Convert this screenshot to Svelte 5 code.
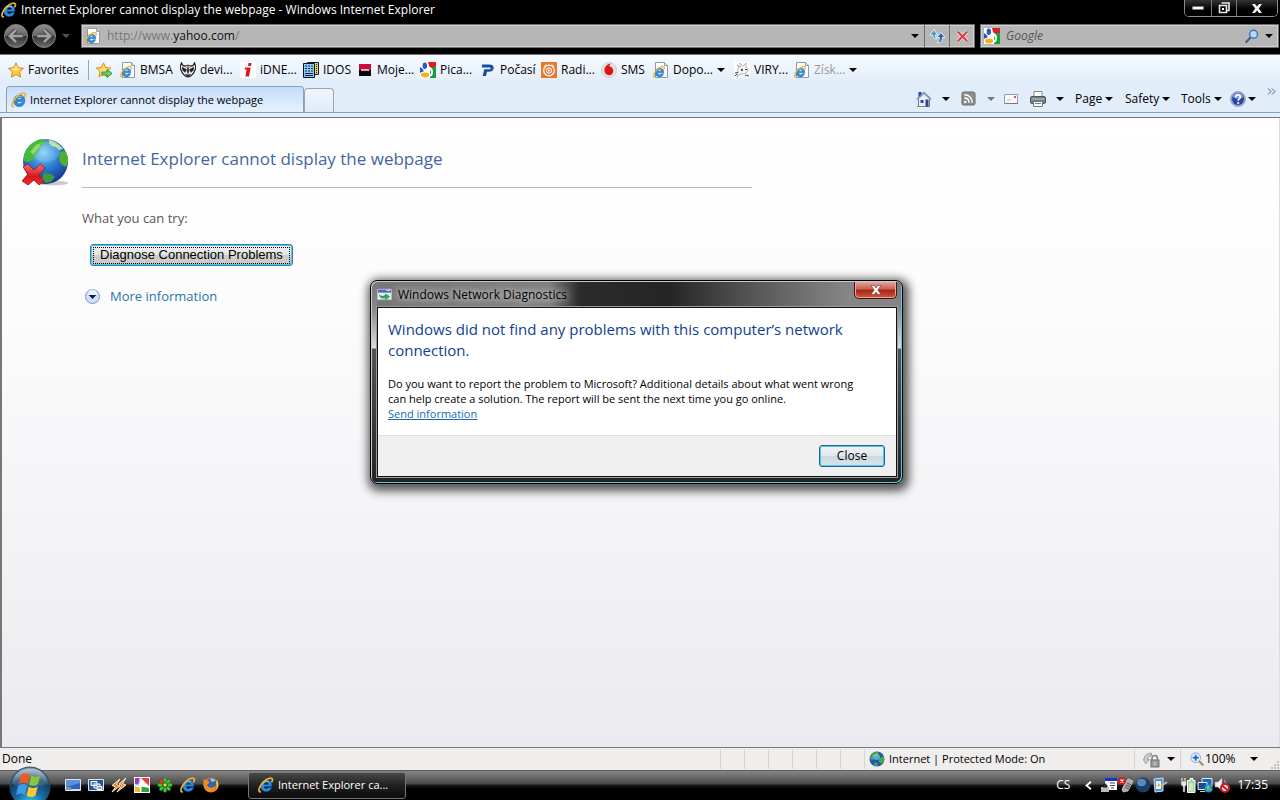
<script>
  const bookmarks = [
    { label: 'BMSA', icon: 'page' },
    { label: 'devi...', icon: 'devil' },
    { label: 'iDNE...', icon: 'idnes' },
    { label: 'IDOS', icon: 'idos' },
    { label: 'Moje...', icon: 'moje' },
    { label: 'Pica...', icon: 'google' },
    { label: 'Počasí', icon: 'pocasi' },
    { label: 'Radi...', icon: 'radio' },
    { label: 'SMS', icon: 'sms' },
    { label: 'Dopo...', icon: 'page', menu: true },
    { label: 'VIRY...', icon: 'viry' },
    { label: 'Získ...', icon: 'page', menu: true, dim: true }
  ];
  const launchers = [
    ['desktop', 'Show desktop'],
    ['switch', 'Switch between windows'],
    ['winamp', 'Winamp'],
    ['picasa', 'Picasa'],
    ['icq', 'ICQ'],
    ['ie', 'Internet Explorer'],
    ['firefox', 'Firefox']
  ];
  const tray = ['keyboard', 'device', 'ball', 'tablet', 'power', 'network', 'mute'];
  let query = $state('');
  let dialogOpen = $state(true);
</script>

{#snippet arrow()}
  <svg class="arrow" viewBox="0 0 8 4" width="8" height="4"><path d="M0 0h8L4 4z" fill="currentColor" /></svg>
{/snippet}

{#snippet ieMark()}
  <path d="M13.900 9.400H6.100c.1 1.500 1 2.400 2.300 2.400 1 0 1.700-.4 2.100-1.200h3.100c-.8 2.600-2.700 4-5.300 4-3.300 0-5.600-2.300-5.600-5.700s2.400-5.800 5.700-5.800c3.500 0 5.600 2.400 5.500 6.300zM6.200 7.400h4.500c-.2-1.200-1-1.900-2.200-1.900s-2 .7-2.300 1.900z" fill="#2c8fe0" stroke="#0d4f9f" stroke-width=".5" />
  <path d="M4.500 6.500c1-2 4-3 6.500-1.500" fill="none" stroke="#8fd0fa" stroke-width=".8" />
  <path d="M2.300 14.900C.2 14.800.6 11.300 3 7.900 6 3.600 11.300.2 13.700 1.400c1 .5.9 1.900.2 3.300" fill="none" stroke="#f1b32c" stroke-width="1.700" stroke-linecap="round" />
{/snippet}

{#snippet googleMark()}
  <path d="M0 0h16v16H0z" fill="#fff" />
  <path d="M8 0h8v5H9z" fill="#e02020" /><path d="M10 5h6v11h-6z" fill="#16a03c" />
  <path d="M0 5l3 2 1 4-4 2z" fill="#2a56c8" />
  <circle cx="5" cy="4" r="3.700" fill="#fff" /><ellipse cx="4.800" cy="3.800" rx="2.200" ry="3.300" fill="#2a56c8" />
  <ellipse cx="5" cy="12.700" rx="5.500" ry="3.300" fill="#fff" /><ellipse cx="5" cy="13" rx="4" ry="2.400" fill="#f3b11e" />
  <path d="M8 5c5 2 5 7 2 9" fill="none" stroke="#fff" stroke-width="2" />
{/snippet}

{#snippet icon(name, size = 16)}
  <svg class="icon" viewBox="0 0 16 16" width={size} height={size} aria-hidden="true">
    {#if name === 'ie'}
      {@render ieMark()}
    {:else if name === 'page'}
      <path d="M2.500.5h9l3 3v12h-12z" fill="#fff" stroke="#8f9aa8" /><path d="M11.500.5v3h3" fill="#dfe6ee" stroke="#8f9aa8" />
      <g transform="translate(0 3.500) scale(.78)">{@render ieMark()}</g>
    {:else if name === 'star'}
      <path d="M8 .8l2.200 4.900 5.300.6-4 3.600 1.200 5.300L8 12.500l-4.700 2.700 1.200-5.300-4-3.600 5.300-.6z" fill="#ffc93c" stroke="#d98a16" stroke-linejoin="round" />
      <path d="M8 2.800l1.500 3.600 3.800.5-6.600 2-3.900-2 3.700-.5z" fill="#ffeb9a" />
    {:else if name === 'addstar'}
      <path d="M7.500.8l2.100 4.700 5.100.6-3.900 3.500 1.100 5.200-4.400-2.600L3 14.800l1.100-5.200L.3 6.100l5-.6z" fill="#ffdf70" stroke="#d98a16" stroke-linejoin="round" />
      <path d="M6 10h5V7.500l5 4-5 4V13H6z" fill="#6ed45c" stroke="#1f7d25" stroke-width=".8" />
    {:else if name === 'devil'}
      <path d="M1.500 1C0 4 0 6.500 1 8c1 3 4 7 7 7s6-4 7-7c1-1.500 1-4-.5-7-.5 2-2 3-3.500 3-2-1-4-1-6 0C3.500 4 2 3 1.500 1z" fill="#fff" stroke="#222" stroke-width="1.200" />
      <path d="M2 5l4.500 2.500L5 10.500 2.500 8zM14 5L9.500 7.500l1.500 3L13.500 8zM8 4l1 5-1 3-1-3zM5 12l3 1 3-1-3 3zM4 4l3 2M12 4L9 6" fill="#222" stroke="#222" stroke-width=".5" />
    {:else if name === 'idnes'}
      <path d="M0 0h16v16H0z" fill="#fff" /><path d="M8.500 1h3L11 4H8zM5 5.500h5.700L9 14.500H5.500l1-7H4.600z" fill="#d91a1a" />
    {:else if name === 'idos'}
      <path d="M4.500.5h11v12h-11z" fill="#e9cf58" stroke="#111b35" /><path d="M.5 1.500h11v14H.5z" fill="#8fcdf0" stroke="#07142f" />
      <path d="M2 4h2M5 4h2M8 4h2M2 6.500h2M5 6.500h2M8 6.500h2M2 9h2M5 9h2M8 9h2M2 11.500h8M2 13.500h8" stroke="#0b2455" /><path d="M13.500 2v10" stroke="#222" stroke-dasharray="1 1" />
    {:else if name === 'moje'}
      <path d="M2 2h12v6H2z" fill="#c90c3e" /><path d="M2 8h12v6H2z" fill="#070707" /><path d="M4 8h8" stroke="#fff" stroke-width="1.400" />
    {:else if name === 'google'}
      {@render googleMark()}
    {:else if name === 'pocasi'}
      <path d="M2 2.500h7.500c3 0 4.500 1.500 4.200 3.700-.3 2.300-2.200 3.600-5 3.600H7L6 14H2.600l1.700-6.700h5c.8 0 1.100-.3 1.200-.9.100-.5-.2-.8-.9-.8H2z" fill="#17509e" />
    {:else if name === 'radio'}
      <path d="M0 0h16v16H0z" fill="#e7792d" /><path d="M3 4.500l2-2M13 4.500l-2-2" stroke="#fff" /><circle cx="8" cy="8.500" r="5.300" fill="none" stroke="#fff" stroke-width="1.200" /><circle cx="8" cy="8.500" r="2.700" fill="none" stroke="#fff" /><path d="M7 7l3 1.500L7 10z" fill="#fff" />
    {:else if name === 'sms'}
      <circle cx="8" cy="8" r="7.500" fill="#e4e4e4" stroke="#bbb" stroke-width=".6" /><path d="M10.800 1.500c-2 .3-2.500 1.700-2.400 2.700 2 .5 3.900 2 3.900 4.600A4.300 4.300 0 0 1 8 13.200a4.600 4.600 0 0 1-4.600-4.800C3.400 5 6 1.500 10.800 1.500z" fill="#df1414" />
    {:else if name === 'viry'}
      <path d="M0 0h16v16H0z" fill="#fff" /><path d="M3 3l3 2 0-4 3 3 3-3 0 4c2 1 2 5 0 6l-3 1H6L3 15l1-5c-1-2 0-4 1-5z" fill="#f4f4f4" stroke="#999" stroke-width=".7" /><circle cx="8" cy="8" r="1" fill="#222" /><path d="M11 7.500h2M1 11l3-.500M11 13l4 1M1 14l2-2" stroke="#444" />
    {:else if name === 'home'}
      <path d="M2.500 1h3v5h-3z" fill="#2337c4" /><path d="M2.500 7.500L8 2.500l5.500 5v8h-11z" fill="#e8eef7" stroke="#6d7b96" /><path d="M.7 8.200L8 1.500l7.300 6.700" fill="none" stroke="#8397bd" stroke-width="1.400" />
      <path d="M4.500 9h3v3h-3z" fill="#2f4d99" /><path d="M9.500 8.500h3v7h-3z" fill="#324789" /><path d="M1 15.500h6" stroke="#5aa44c" />
    {:else if name === 'feed'}
      <rect x="1" y="1" width="14" height="14" rx="2" fill="#8b8b8b" stroke="#6f6f6f" /><circle cx="4.500" cy="11.700" r="1.300" fill="#fff" /><path d="M3.500 7.500c3 0 5 2 5 5M3.500 4c5 0 8.500 3.500 8.500 8.500" fill="none" stroke="#fff" stroke-width="1.500" />
    {:else if name === 'mail'}
      <path d="M1.500 3.500h13v9h-13z" fill="#f8f8fa" stroke="#9b9ba6" /><path d="M2 12.500h13" stroke="#777" /><path d="M11 5h2v2h-2z" fill="#d45454" /><path d="M4 9h4" stroke="#bbb" />
    {:else if name === 'printer'}
      <path d="M4 .5h8v6H4z" fill="#fff" stroke="#888" /><rect x=".5" y="5.500" width="15" height="7" rx="1.500" fill="#777d85" stroke="#4f555c" /><path d="M1.500 8h13" stroke="#c4c9cf" /><path d="M3.500 10.500h9v5h-9z" fill="#f6f8f9" stroke="#777" /><path d="M5 12.500h6" stroke="#3e9c7e" />
    {:else if name === 'help'}
      <circle cx="8" cy="8" r="7.500" fill="#9aa7c5" stroke="#7f8ca8" stroke-width=".6" /><circle cx="8" cy="8" r="6" fill="#2346a8" /><path d="M2.800 6a5.500 5.500 0 0 1 10.400 0c-3 2-7 2-10.400 0z" fill="#7f9fdf" /><path d="M5.700 6.200c.1-3 4.700-2.900 4.700-.2 0 1.700-2.200 1.800-2.200 3.800" fill="none" stroke="#fff" stroke-width="1.700" /><circle cx="8.200" cy="12" r="1.100" fill="#fff" />
    {:else if name === 'refresh'}
      <path d="M5 1.500L.8 7h2.700c.2 3 2 4 4.300 4-1-1.200-1.500-2.500-1.400-4H9C7.500 6 6.500 4 5 1.500z" fill="#4f97d6" stroke="#fff" stroke-width=".8" /><path d="M11.800 4.500L8 9.500h2.400c0 3-.8 4-2.400 5.200 4 0 5.600-2 5.300-5.200H16z" fill="#2464b4" stroke="#fff" stroke-width=".8" />
    {:else if name === 'stop'}
      <path d="M3 3l10 10M13 3L3 13" stroke="#f3dede" stroke-width="4" /><path d="M3 3l10 10M13 3L3 13" stroke="#d2434a" stroke-width="2.200" />
    {:else if name === 'search'}
      <path d="M6.500 9.500l-5 5.300" stroke="#40608f" stroke-width="2.400" stroke-linecap="round" /><circle cx="9.800" cy="6" r="4.500" fill="#b9dbf5" stroke="#3b77bd" stroke-width="1.700" />
    {:else if name === 'globe'}
      <circle cx="8" cy="8" r="7.500" fill="#235ba8" /><path d="M3 3c3-3 6-2 7-1L9 5 5 6 4 9 1 8zM10 8l4-3c2 2 1 6-1 8l-3-2zM6 11l3 2-1 2-3-1z" fill="#49ad45" /><ellipse cx="7.500" cy="6" rx="3.500" ry="3" fill="#8cd4f4" opacity=".6" />
    {:else if name === 'lock'}
      <path d="M1 8c0-4 3-6 7-6v2.500C5.500 4.500 4 6 4 8H6L2.800 12 0 8z" fill="#ccc" stroke="#8e8e8e" stroke-width=".7" /><path d="M8.500 9V6.500c0-3 5-3 5 0V9" fill="none" stroke="#888" stroke-width="1.500" /><rect x="7.500" y="8.500" width="7.500" height="6.500" fill="#9c9c9c" stroke="#707070" /><path d="M11.200 10.500v3" stroke="#ddd" />
    {:else if name === 'zoomin'}
      <path d="M10 10l4.500 4.500" stroke="#ae8760" stroke-width="2.500" stroke-linecap="round" /><circle cx="6.500" cy="6.500" r="5.500" fill="#e4f3ff" stroke="#7f9fc4" /><path d="M6.500 3v7M3 6.500h7" stroke="#1764c5" stroke-width="2" />
    {:else if name === 'desktop'}
      <path d="M.5 2.500h15v11H.5z" fill="#2f66ba" stroke="#dbe6f2" /><path d="M1 3h14v3L1 10z" fill="#5c92dc" /><path d="M1 12.500h14" stroke="#cbd6e4" /><path d="M1 10h5v3H1z" fill="#8795a5" />
    {:else if name === 'switch'}
      <path d="M.5 2.500h15v11H.5z" fill="#24568f" stroke="#dbe6f2" /><path d="M3 4.500h6v4H3zM6 7h6v4H6z" fill="#4d83bb" stroke="#fff" /><path d="M9 9.500h5v3H9z" fill="#7ba9d8" stroke="#fff" />
    {:else if name === 'winamp'}
      <path d="M9 2L1 8.500l3.500 1.500L1 15l8-6-3.500-1.500z" fill="#e7852b" stroke="#fff0c5" /><path d="M15 1L8 7l2.500 1.500L6 15l9-7-3.500-1.500z" fill="#f0963a" stroke="#fff0c5" />
    {:else if name === 'picasa'}
      <path d="M0 0h16v16H0z" fill="#fff" /><path d="M1 1h5L4 7H1z" fill="#a637b8" /><path d="M7 1h8v8z" fill="#ef3c43" /><path d="M1 9l5 2v4H1z" fill="#f4b72c" /><path d="M7.500 9.500L15 11v4H7.500z" fill="#2ca83b" /><path d="M1 8l5-5 1 6z" fill="#2874dc" opacity=".5" /><path d="M4.500 8L7 3l6 6-6 1z" fill="#fff" />
    {:else if name === 'icq'}
      {#each [0, 45, 90, 135, 180, 225, 270, 315] as a}
        <ellipse cx="8" cy="3.200" rx="1.900" ry="2.700" fill={a === 315 ? '#e53c24' : '#48c23b'} stroke="#145d16" stroke-width=".5" transform="rotate({a} 8 8)" />
      {/each}
      <circle cx="8" cy="8" r="1.700" fill="#e8e24b" />
    {:else if name === 'firefox'}
      <circle cx="8" cy="8" r="7.500" fill="#e8711c" /><circle cx="8.300" cy="6.500" r="5" fill="#2c65b5" /><path d="M7 2c2-1 5 0 5 2L9 5z" fill="#8ecff0" /><path d="M1 2c1 1 3 1 5 2 1 2-1 3-2 4 1 3 5 4 8 1 1 3-2 6-5 6C2 15-1 8 1 2z" fill="#f08a20" /><path d="M14 3c2 3 2 8-1 10 1-2 1-5 0-7z" fill="#ffc63c" />
    {:else if name === 'diag'}
      <path d="M.5 2.500h15v11H.5z" fill="#e5edf3" stroke="#b5bcc4" /><path d="M1 3h14v3H1z" fill="#5a60bd" /><path d="M10 3.500h4" stroke="#fff" /><path d="M2 8c4 3 7 1 7-1l5 3-5 4v-2c-4 1-7-1-7-4z" fill="#2fa45a" />
    {:else if name === 'keyboard'}
      <path d="M4 1h12v12H4z" fill="#fff" /><path d="M4 1h12v3H4z" fill="#1b2ed1" /><path d="M9 6h5M9 8.500h5M10 11h3" stroke="#444" /><path d="M0 10h8v5H0z" fill="#bbb" /><path d="M2 10c0-4 4-4 4 0z" fill="#333" stroke="#111" />
    {:else if name === 'device'}
      <path d="M10 2l5 2-5 10-5 1-1-3z" fill="#a9a9a9" stroke="#ddd" stroke-width=".7" /><path d="M9 6l4 2M8 8l4 2M7 10l4 2" stroke="#555" /><circle cx="4" cy="4" r="3.800" fill="#d8181c" /><path d="M2.500 2.500l3 3M5.500 2.500l-3 3" stroke="#fff" stroke-width="1.200" />
    {:else if name === 'ball'}
      <circle cx="8" cy="8" r="7.500" fill="#183e69" /><ellipse cx="6.500" cy="5.500" rx="4.500" ry="3.700" fill="#6f9cc4" opacity=".8" />
    {:else if name === 'tablet'}
      <path d="M2 2l9-1v13l-8 1z" fill="#4a8fda" stroke="#cae2f5" /><path d="M4 4h5v8H4z" fill="#f4f5e7" /><path d="M6 5l1 2 2 1-2 1-1 2V9L4 8h2z" fill="#e7a928" /><path d="M9 9l6-4" stroke="#b0bcc7" stroke-width="2" />
    {:else if name === 'power'}
      <path d="M7.500 3.500H10v-2h3v2h2v12H7.500z" fill="#a7d5a2" stroke="#fff" /><path d="M9 6h4v8H9z" fill="#cdebc9" /><path d="M2 1v3M5 1v3" stroke="#f0d589" stroke-width="1.400" /><path d="M1 4h5.500v4L5 9.500V15H3V9.500L1 8z" fill="#e5e5e5" stroke="#555" stroke-width=".5" />
    {:else if name === 'network'}
      <path d="M5 1.500h10v8H5z" fill="#1d68b6" stroke="#d9edfa" /><path d="M1 5.500h9v7H1z" fill="#174e98" stroke="#d9edfa" /><path d="M3 14.500h5" stroke="#ccc" /><circle cx="11.500" cy="11.500" r="4" fill="#268fd2" /><path d="M9 10l3-2 1 3-2 3zM13 12l2 0-1 2z" fill="#5fd052" />
    {:else if name === 'mute'}
      <path d="M1 5h3l4-4v13l-4-4H1z" fill="#eee" stroke="#999" stroke-width=".5" /><path d="M10 3c2 2 2 5 0 7" fill="none" stroke="#ccc" /><circle cx="11" cy="11" r="4" fill="#e6eaea" stroke="#cd1720" stroke-width="2" /><path d="M8 8.500l6 5" stroke="#cd1720" stroke-width="2" />
    {/if}
  </svg>
{/snippet}

<div class="screen">
  <header class="chrome">
    <div class="titlebar">
      {@render icon('ie')}
      <h1>Internet Explorer cannot display the webpage - Windows Internet Explorer</h1>
      <div class="winbtns">
        <button aria-label="Minimize"><svg width="12" height="4"><path d="M.5.5h11v3H.5z" fill="#fff" stroke="#777" /></svg></button>
        <button aria-label="Restore"><svg width="12" height="12"><path d="M3.500 1h7.500v7.500H8.500M1.500 3.500h7v7h-7z" fill="none" stroke="#e8e8e8" stroke-width="1.600" /><path d="M4 6h2v2H4z" fill="#fff" /></svg></button>
        <button aria-label="Close window"><svg width="12" height="11"><path d="M1 1h3l2 2.500L8 1h3L7.800 5.500 11 10H8L6 7.500 4 10H1l3.200-4.500z" fill="#f2f2f2" /></svg></button>
      </div>
    </div>
    <div class="navrow">
      <div class="travel">
        <button class="round" aria-label="Back"><svg viewBox="0 0 16 16" width="18" height="18"><path d="M8 2.500L2.500 8 8 13.500M3 8h11" fill="none" stroke="#444" stroke-width="4" /><path d="M8 2.500L2.500 8 8 13.500M3 8h11" fill="none" stroke="#a2a2a2" stroke-width="2.200" /></svg></button>
        <button class="round" aria-label="Forward"><svg viewBox="0 0 16 16" width="18" height="18"><path d="M8 2.500L13.500 8 8 13.500M13 8H2" fill="none" stroke="#444" stroke-width="4" /><path d="M8 2.500L13.500 8 8 13.500M13 8H2" fill="none" stroke="#a2a2a2" stroke-width="2.200" /></svg></button>
        <button class="plain recent" aria-label="Recent pages">{@render arrow()}</button>
      </div>
      <div class="field">
        {@render icon('page')}
        <div class="url" role="textbox" aria-label="Address" tabindex="0">http://www.<b>yahoo.com</b>/</div>
        <button class="plain drop" aria-label="Address list">{@render arrow()}</button>
        <button class="plain cell" aria-label="Refresh">{@render icon('refresh')}</button>
        <button class="plain cell" aria-label="Stop">{@render icon('stop', 15)}</button>
      </div>
      <div class="field">
        {@render icon('google')}
        <input type="search" placeholder="Google" aria-label="Search" bind:value={query} />
        <button class="plain" aria-label="Search">{@render icon('search', 14)}</button>
        <button class="plain drop" aria-label="Search options">{@render arrow()}</button>
      </div>
    </div>
  </header>

  <div class="bars">
    <nav class="favorites" aria-label="Favorites bar">
      <button class="plain fav">{@render icon('star')}Favorites</button>
      <button class="plain add" aria-label="Add to Favorites bar">{@render icon('addstar')}</button>
      {#each bookmarks as b}
        <button class="plain fav" class:dim={b.dim}>
          {@render icon(b.icon)}<span>{b.label}</span>
          {#if b.menu}{@render arrow()}{/if}
        </button>
      {/each}
    </nav>
    <div class="tabrow">
      <button class="tab">{@render icon('ie')}Internet Explorer cannot display the webpage</button>
      <button class="newtab" aria-label="New tab"></button>
      <div class="commands">
        <button class="plain" aria-label="Home">{@render icon('home')}</button>
        <button class="plain" aria-label="Home menu">{@render arrow()}</button>
        <button class="plain" aria-label="Feeds">{@render icon('feed', 15)}</button>
        <button class="plain faint" aria-label="Feeds menu">{@render arrow()}</button>
        <button class="plain" aria-label="Read mail">{@render icon('mail')}</button>
        <button class="plain" aria-label="Print">{@render icon('printer')}</button>
        <button class="plain" aria-label="Print menu">{@render arrow()}</button>
        <button class="plain">Page{@render arrow()}</button>
        <button class="plain">Safety{@render arrow()}</button>
        <button class="plain">Tools{@render arrow()}</button>
        <button class="plain help" aria-label="Help">{@render icon('help')}{@render arrow()}</button>
        <button class="plain more" aria-label="More commands"><svg width="9" height="7"><path d="M1 .5l3 3-3 3M5 .5l3 3-3 3" fill="none" stroke="#4c5f94" /></svg></button>
      </div>
    </div>
  </div>

  <main>
    <svg class="planet" viewBox="0 0 48 48" width="48" height="48" aria-hidden="true">
      <defs>
        <radialGradient id="sea" cx=".45" cy=".3" r=".7"><stop offset="0" stop-color="#7fd3f7" /><stop offset=".5" stop-color="#2a7fd0" /><stop offset="1" stop-color="#15358f" /></radialGradient>
        <linearGradient id="cross" x2="0" y2="1"><stop offset="0" stop-color="#f07070" /><stop offset=".6" stop-color="#d81818" /><stop offset="1" stop-color="#e83030" /></linearGradient>
      </defs>
      <ellipse cx="30" cy="45" rx="16" ry="2.500" fill="#000" opacity=".2" />
      <circle cx="23.500" cy="23.500" r="22.500" fill="url(#sea)" />
      <path d="M2 17C5 8 12 2 20 1l4 2-2 4-5 2 1 3-4 4-3 6-5 2-4-1z" fill="#48b83c" />
      <path d="M8 14l6-7 5-2-3 6-5 5z" fill="#a9e27d" opacity=".6" />
      <path d="M27 2c6 1 11 5 14 9l-4 1-3-3-4-1-3-3z" fill="#b9dfa0" />
      <path d="M38 14l5-1c4 5 4 12 1 16l-4-2-3-5z" fill="#51ad35" />
      <path d="M22 35l7 1 4 3-4 5-6 1-3-4z" fill="#3b9b3e" />
      <ellipse cx="24" cy="14" rx="14" ry="10" fill="#fff" opacity=".15" />
      <path d="M1 29l5-3 6 6 6-6 5 4-6 7 5 6-5 4-5-5-6 5-6-4 6-7z" fill="url(#cross)" stroke="#a31313" stroke-width=".8" />
    </svg>
    <section class="message">
      <h2>Internet Explorer cannot display the webpage</h2>
      <p>What you can try:</p>
      <button class="diagnose"><span>Diagnose Connection Problems</span></button>
      <button class="plain moreinfo">
        <svg width="15" height="15" viewBox="0 0 15 15" aria-hidden="true"><circle cx="7.500" cy="7.500" r="7" fill="#cfe0f5" stroke="#7896c8" /><circle cx="7.500" cy="5" r="4.500" fill="#f4f9ff" opacity=".7" /><path d="M3.500 6h8l-4 4z" fill="#0a1f55" /></svg>
        More information
      </button>
    </section>
  </main>

  <footer class="status">
    <span class="done">Done</span>
    <span></span><span></span><span></span><span></span><span></span><span></span>
    <span class="zone">{@render icon('globe')}Internet | Protected Mode: On</span>
    <button class="plain pair" aria-label="Privacy report">{@render icon('lock', 17)}{@render arrow()}</button>
    <button class="plain zoom">{@render icon('zoomin', 14)}100%{@render arrow()}</button>
    <svg class="grip" width="9" height="9"><path d="M6 0h2v2H6zM3 3h2v2H3zM6 3h2v2H6zM0 6h2v2H0zM3 6h2v2H3zM6 6h2v2H6z" fill="#c3c0bd" /></svg>
  </footer>

  <div class="taskbar">
    <button class="orb" aria-label="Start">
      <svg viewBox="0 0 42 42" width="42" height="42">
        <defs>
          <radialGradient id="orb" cx=".5" cy=".95" r=".9"><stop offset="0" stop-color="#35d6ff" /><stop offset=".4" stop-color="#1a6da6" /><stop offset=".75" stop-color="#123f63" /><stop offset="1" stop-color="#6c8ba0" /></radialGradient>
          <linearGradient id="shine" x2="0" y2="1"><stop offset="0" stop-color="#fff" stop-opacity=".75" /><stop offset="1" stop-color="#fff" stop-opacity=".12" /></linearGradient>
        </defs>
        <circle cx="21" cy="21" r="20" fill="url(#orb)" stroke="#2a4a60" />
        <path d="M3 18C5 7 13 2.500 21 2.500S37 7 39 18c-9 4-27 4-36 0z" fill="url(#shine)" opacity=".65" />
        <path d="M12.500 8.500c3-1.500 5.500-1.500 8.500.3L18.800 18c-3-2-6-2-9 0z" fill="#ee5a24" />
        <path d="M22.300 9.500c3 1.700 6 1.700 9-.3L29 18.300c-3 2-6 2-9 .2z" fill="#8ac53f" />
        <path d="M9.300 19.500c3-2 6-2 9 0L16 29c-3-2-6-2-9 0z" fill="#3f9be6" />
        <path d="M19.700 20.500c3 2 6 2 9 0L26.500 29.500c-3 2-6 2-9 0z" fill="#fcc92e" />
      </svg>
    </button>
    <div class="quick">
      {#each launchers as [name, label]}
        <button class="plain" aria-label={label}>{@render icon(name)}</button>
      {/each}
    </div>
    <button class="task">{@render icon('ie')}Internet Explorer ca...</button>
    <div class="tray">
      <span class="lang">CS</span>
      <button class="plain chev" aria-label="Show hidden icons"><svg width="7" height="9"><path d="M6 .8L1.500 4.500 6 8.200" fill="none" stroke="#fff" stroke-width="1.800" /></svg></button>
      {#each tray as name}
        <span class="trayicon" class:gap={name === 'power'}>{@render icon(name)}</span>
      {/each}
      <time>17:35</time>
    </div>
  </div>

  {#if dialogOpen}
    <div class="dialog" role="dialog" aria-labelledby="dlg-title">
      <div class="dlgbar">
        {@render icon('diag', 15)}
        <span id="dlg-title">Windows Network Diagnostics</span>
        <button class="dlgx" aria-label="Close dialog" onclick={() => (dialogOpen = false)}>
          <svg width="12" height="10"><path d="M1 .5h3.200L6 3 7.800.5H11L7.800 5 11 9.500H7.800L6 7 4.200 9.500H1L4.200 5z" fill="#fff" stroke="#6b3a36" stroke-width=".6" /></svg>
        </button>
      </div>
      <div class="pane">
        <div class="dlgbody">
          <h3>Windows did not find any problems with this computer’s network connection.</h3>
          <p>Do you want to report the problem to Microsoft? Additional details about what went wrong can help create a solution. The report will be sent the next time you go online.</p>
          <a href="#send">Send information</a>
        </div>
        <div class="dlgfoot"><button class="close" onclick={() => (dialogOpen = false)}>Close</button></div>
      </div>
    </div>
  {/if}
</div>

<style>
  :global(body) { margin: 0; }
  .screen, .screen * { box-sizing: border-box; }
  .screen {
    position: relative;
    display: flex;
    flex-direction: column;
    min-height: 100vh;
    overflow: hidden;
    background: #000;
    font: 12px/16px 'Open Sans', 'Noto Sans', sans-serif;
    color: #000;
  }
  h1, h2, h3, p { margin: 0; font-weight: 400; }
  button, input { font: inherit; color: inherit; }
  button { padding: 0; white-space: nowrap; }
  .plain { display: flex; align-items: center; gap: 4px; border: 0; background: none; }
  .icon, .arrow { display: block; flex: none; }

  .chrome { background: #000; color: #fff; }
  .titlebar { display: flex; align-items: flex-start; gap: 4px; height: 24px; padding-left: 1px; }
  .titlebar .icon { margin-top: 2px; }
  h1 { flex: 1; margin-top: 2px; font-size: 12px; line-height: 16px; }
  .winbtns { display: grid; grid-template-columns: 26px 25px 41px; height: 17px; margin-right: 2px; border: 1px solid #8c8c8c; border-top: 0; border-radius: 0 0 5px 5px; overflow: hidden; }
  .winbtns button { display: flex; align-items: center; justify-content: center; border: 0; border-left: 1px solid #777; background: linear-gradient(#333, #000 60%); }
  .winbtns button:first-child { border-left: 0; }
  .navrow { display: grid; grid-template-columns: 76px 1fr 299px; gap: 5px; height: 31px; padding: 0 1px 6px 0; border-bottom: 1px solid #777; }
  .travel { display: flex; align-items: center; gap: 4px; padding-left: 4px; }
  .round { display: grid; place-items: center; width: 24px; height: 24px; border: 1px solid #8a8a8a; border-radius: 50%; background: linear-gradient(#8b8b8b, #666 50%, #333 51%, #6a6a6a); }
  .recent { margin-left: 2px; color: #555; }
  .field { display: flex; align-items: center; gap: 6px; border: 1px solid #6b6b6b; box-shadow: inset 0 0 0 1px #d2d2d2; background: #b6b6b6; color: #555; padding-left: 3px; min-width: 0; }
  .url { flex: 1; color: #777; }
  .url b { font-weight: 400; color: #111; }
  .field input { flex: 1; min-width: 0; padding: 0; border: 0; outline: 0; background: none; font-style: italic; }
  .field input::placeholder { color: #555; opacity: 1; }
  .field .drop { width: 13px; color: #000; }
  .field .cell { justify-content: center; align-self: stretch; width: 25px; margin-left: -6px; border-left: 1px solid #6b6b6b; }

  .bars { padding-bottom: 4px; background: linear-gradient(#f7faff, #e1edf9 45%, #e1edf9); border-bottom: 1px solid #777; }
  .favorites { display: grid; grid-template-columns: 88px 24px 60px 60px 63px 54px 63px 60px 61px 60px 52px 81px 60px 66px; height: 30px; padding-left: 8px; }
  .favorites .fav:first-child { margin: 5px 7px 5px 0; border-right: 1px solid #9ba6b5; }
  .dim span { color: #999; }
  .tabrow { display: flex; align-items: stretch; height: 28px; padding-left: 6px; border-bottom: 1px solid #8aa0b8; }
  .tab { display: flex; align-items: center; gap: 3px; width: 298px; margin-top: 1px; padding-left: 4px; border: 1px solid #8aa0b8; border-bottom: 0; border-radius: 4px 4px 0 0; background: linear-gradient(#c3dcfb, #e8f2fe); font-size: 11px; }
  .newtab { width: 30px; margin-top: 3px; border: 1px solid #9aa5b3; border-bottom: 0; border-radius: 4px 4px 0 0; background: linear-gradient(#f1f6fc, #dfebf8); }
  .commands { display: grid; grid-template-columns: 26px 19px 26px 16px 27px 26px 19px 50px 56px 49px 37px 13px; margin-left: auto; }
  .commands .plain { gap: 3px; }
  .commands .help { gap: 2px; }
  .commands .faint { color: #777; }
  .commands .more { align-items: flex-start; padding-top: 3px; }

  main { flex: 1; display: flex; align-items: flex-start; gap: 12px; padding: 20px; border-left: 2px solid #777; border-right: 1px solid #ddd; background: linear-gradient(#fff, #fcfcfd 30%, #ebebef); }
  .planet { flex: none; }
  .message { display: flex; flex-direction: column; align-items: flex-start; flex: 0 1 670px; }
  h2 { width: 100%; padding: 9px 0 16px; border-bottom: 1px solid #b4b9b8; color: #4465a2; font-size: 17px; line-height: 24px; }
  .message p { margin-top: 20px; color: #575757; font-size: 13px; line-height: 20px; }
  .diagnose { height: 22px; margin: 16px 0 0 8px; padding: 1px; border: 1px solid #2f7fa8; border-radius: 3px; box-shadow: inset 0 0 0 1px #55c5ea; background: linear-gradient(#f1f1f1, #e3e3e3 50%, #cfcfcf 51%, #c8c8c8); font: 13px/14px 'Liberation Sans', sans-serif; }
  .diagnose span { display: block; margin: 1px; padding: 0 6px 1px; border: 1px dotted #000; }
  .message .moreinfo { gap: 10px; margin: 20px 0 0 3px; color: #2a75a9; font-size: 13px; line-height: 20px; }

  .status { display: grid; grid-template-columns: 1fr repeat(6, 24px) 270px 46px 86px 14px; align-items: center; height: 23px; border-top: 1px solid #777; background: #f0eded; }
  .status > span, .status > .pair, .status > .zoom { height: 20px; border-left: 1px solid #d5d2d2; }
  .status > .done { padding: 2px 2px; border-left: 0; }
  .status .zone { display: flex; align-items: center; gap: 4px; padding-left: 4px; font-size: 11px; }
  .status .pair { padding-left: 8px; gap: 7px; }
  .status .zoom { padding-left: 9px; gap: 1px; }
  .zoom .arrow { margin-left: 13px; }
  .grip { align-self: end; justify-self: end; }

  .taskbar { position: relative; display: flex; align-items: center; height: 30px; padding-left: 65px; background: linear-gradient(#333 0, #858585 1px, #4a4a4a 14px, #1c1c1c 15px, #000 19px); color: #fff; }
  .orb { position: absolute; left: 9px; top: -4px; border: 0; border-radius: 50%; background: none; }
  .quick { display: flex; gap: 7px; }
  .task { display: flex; align-items: center; gap: 4px; width: 158px; height: 27px; margin-left: 29px; padding-left: 9px; border: 1px solid #777; border-radius: 3px; background: linear-gradient(#484848, #202020 50%, #0c0c0c); font-size: 11px; }
  .tray { display: flex; align-items: center; margin-left: auto; padding-right: 12px; }
  .chev { margin: 0 9px 0 15px; }
  .trayicon { width: 17px; }
  .trayicon.gap { margin-left: 11px; }
  time { margin-left: 6px; }

  .dialog { position: absolute; left: 370px; top: 280px; width: 533px; padding: 1px 5px 6px 6px; border: 1px solid #000; border-radius: 7px; box-shadow: inset -1px -1px 0 #62c5e4, inset 1px 1px 0 #c9c9c9, 2px 3px 10px 4px rgb(0 0 0 / 65%); background: linear-gradient(#777, #888 27px, #ddd 67px, #555 68px, #333 80%, #222); }
  .dlgbar { display: flex; align-items: center; gap: 6px; height: 25px; background: linear-gradient(90deg, #777 0, #808080 33%, #2b2b2b 39%, #252525 56%, #555 72%, #858585 90%); }
  .dlgbar span { text-shadow: 0 0 6px #ddd, 0 0 8px #ccc; }
  .dlgx { display: grid; place-items: center; align-self: flex-start; width: 43px; height: 17px; margin-left: auto; border: 1px solid #3d1512; border-top: 0; border-radius: 0 0 5px 5px; box-shadow: inset 0 0 0 1px #e6a79e; background: linear-gradient(#e0a396, #c9604e 45%, #a32413 50%, #d3573d); }
  .pane { border: 1px solid #111; box-shadow: 0 0 0 1px #9a9a9a; background: #fff; }
  .dlgbody { padding: 11px 26px 14px 10px; border-bottom: 1px solid #dfdfdf; }
  h3 { margin-bottom: 15px; color: #103e92; font-size: 15px; line-height: 21px; }
  .dlgbody p, .dlgbody a { font-size: 11px; line-height: 15px; }
  .dlgbody a { display: block; width: fit-content; color: #1468b8; }
  .dlgfoot { display: flex; justify-content: flex-end; padding: 9px 11px; background: #f0f0f0; }
  .close { width: 66px; height: 22px; border: 1px solid #2c628b; border-radius: 3px; box-shadow: inset 0 0 0 1px #4cc6ee; background: linear-gradient(#f0f4f5, #e0e8ec 50%, #cbd8de 51%, #d8e6eb); }
</style>
